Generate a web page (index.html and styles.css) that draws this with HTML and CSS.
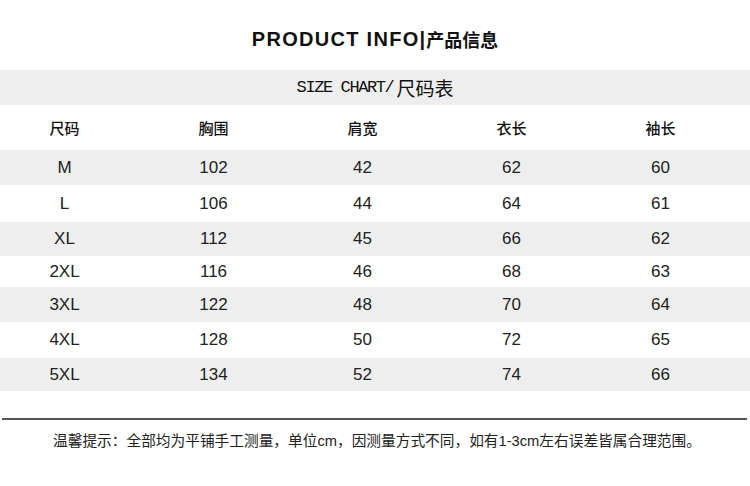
FILE: index.html
```html
<!DOCTYPE html>
<html lang="zh">
<head>
<meta charset="utf-8">
<link rel="stylesheet" href="styles.css">
</head>
<body>
<div class="page">
  <h1 class="title"><span class="title-en">PRODUCT INFO</span><span class="title-bar">|</span><span class="title-cn">产品信息</span></h1>
  <div class="band"><span class="band-en">SIZE CHART/</span><span class="band-cn">尺码表</span></div>
  <div class="row head">
    <div class="cell first">尺码</div>
    <div class="cell">胸围</div>
    <div class="cell">肩宽</div>
    <div class="cell">衣长</div>
    <div class="cell">袖长</div>
  </div>
  <div class="body">
    <div class="row alt"><div class="cell first">M</div><div class="cell">102</div><div class="cell">42</div><div class="cell">62</div><div class="cell">60</div></div>
    <div class="row"><div class="cell first">L</div><div class="cell">106</div><div class="cell">44</div><div class="cell">64</div><div class="cell">61</div></div>
    <div class="row alt"><div class="cell first">XL</div><div class="cell">112</div><div class="cell">45</div><div class="cell">66</div><div class="cell">62</div></div>
    <div class="row"><div class="cell first">2XL</div><div class="cell">116</div><div class="cell">46</div><div class="cell">68</div><div class="cell">63</div></div>
    <div class="row alt"><div class="cell first">3XL</div><div class="cell">122</div><div class="cell">48</div><div class="cell">70</div><div class="cell">64</div></div>
    <div class="row"><div class="cell first">4XL</div><div class="cell">128</div><div class="cell">50</div><div class="cell">72</div><div class="cell">65</div></div>
    <div class="row alt"><div class="cell first">5XL</div><div class="cell">134</div><div class="cell">52</div><div class="cell">74</div><div class="cell">66</div></div>
  </div>
  <div class="rule"></div>
  <p class="note">温馨提示：全部均为平铺手工测量，单位cm，因测量方式不同，如有1-3cm左右误差皆属合理范围。</p>
</div>
</body>
</html>
```
FILE: styles.css
```css
html, body {
  margin: 0;
  padding: 0;
  background: #ffffff;
}

.page {
  width: 750px;
  height: 486px;
  overflow: hidden;
  font-family: "Liberation Sans", "Noto Sans CJK SC", sans-serif;
  color: #222222;
}

.title {
  margin: 0;
  height: 70px;
  display: flex;
  align-items: center;
  justify-content: center;
  padding-top: 8px;
  box-sizing: border-box;
  font-weight: bold;
  color: #111111;
}

.title-en {
  font-family: "Liberation Sans", sans-serif;
  font-size: 20px;
  letter-spacing: 1.3px;
}

.title-bar {
  font-family: "Liberation Sans", sans-serif;
  font-size: 20px;
  margin: 0 1px 0 0;
}

.title-cn {
  font-family: "Noto Sans CJK SC", sans-serif;
  font-size: 18px;
}

.band {
  height: 35px;
  background: #eeeeee;
  display: flex;
  align-items: center;
  justify-content: center;
  color: #111111;
}

.band-en {
  font-family: "Liberation Mono", monospace;
  font-size: 17px;
  letter-spacing: -1.4px;
  margin-right: 3px;
}

.band-cn {
  font-family: "Noto Sans CJK SC", sans-serif;
  font-size: 19px;
}

.row {
  display: grid;
  grid-template-columns: 139px 149px 149px 149px 149px;
  align-items: center;
}

.row.head {
  height: 45px;
  font-family: "Noto Sans CJK SC", sans-serif;
  font-size: 15px;
  font-weight: 500;
  color: #111111;
}

.body {
  display: grid;
  grid-template-rows: 35px 37px 34px 31px 35px 36px 33px;
  font-size: 17px;
}

.row.alt {
  background: #eeeeee;
}

.cell {
  text-align: center;
}

.cell.first {
  padding-right: 10px;
}

.rule {
  margin: 27px 3px 0 2px;
  height: 2px;
  background: #555555;
}

.note {
  margin: 9px 0 0 53px;
  font-family: "Liberation Sans", "Noto Sans CJK SC", sans-serif;
  font-size: 14.7px;
  color: #222222;
  white-space: nowrap;
}
```
